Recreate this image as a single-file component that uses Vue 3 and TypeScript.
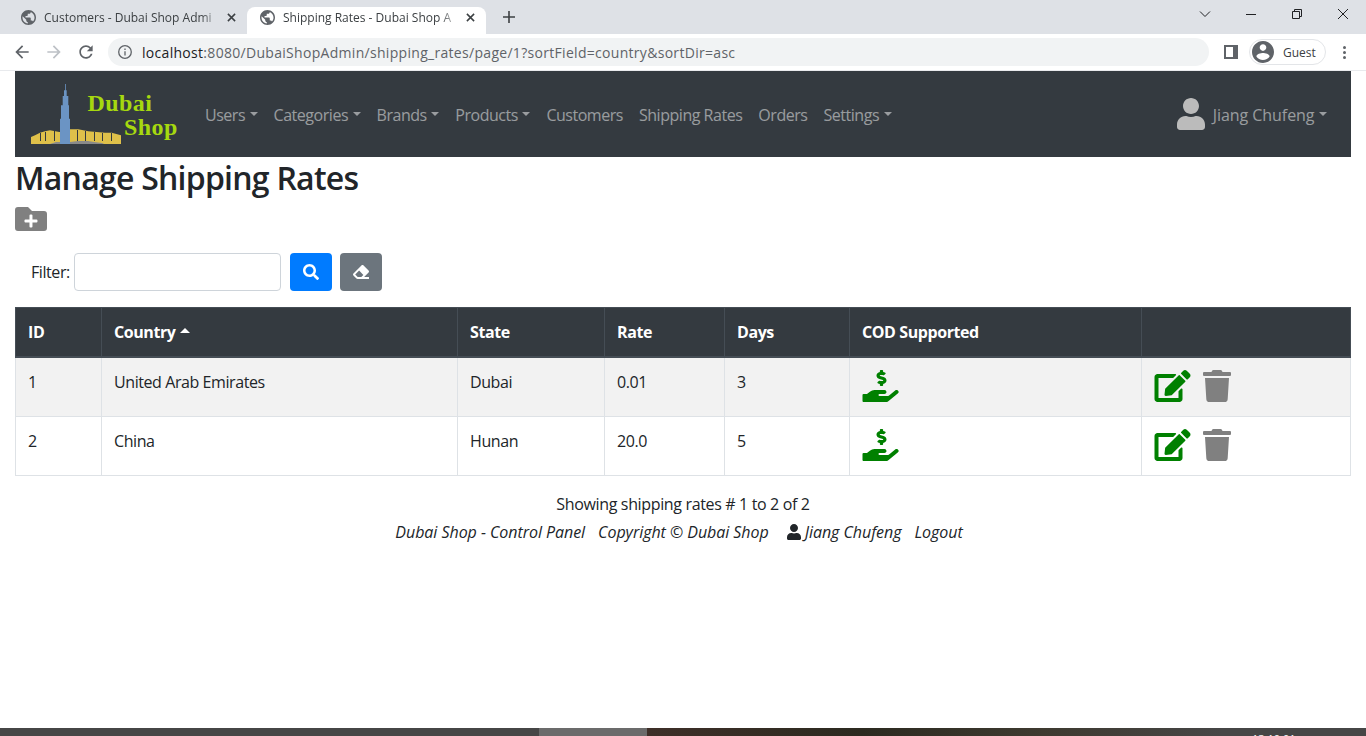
<template>
  <div class="screen">
    <header class="browser">
      <div class="tabstrip">
        <div v-for="t in tabs" :key="t.title" class="tab" :class="{ active: t.active }">
          <svg class="globe" viewBox="2 2 20 20"><path :d="icons.globe" /></svg>
          <span class="tab-title">{{ t.title }}</span>
          <svg class="tab-x" viewBox="0 0 10 10"><path d="M1 1l8 8M9 1l-8 8" /></svg>
        </div>
        <svg class="new-tab" viewBox="0 0 12 12"><path d="M6 0v12M0 6h12" /></svg>
        <div class="win-controls">
          <svg viewBox="0 0 12 12"><path d="M1 3.5l5 5 5-5" /></svg>
          <svg viewBox="0 0 12 12"><path d="M1 6.5h10" /></svg>
          <svg viewBox="0 0 12 12"><path d="M1.5 3.5h7v7h-7zM3.5 3.5v-2h7v7h-2" /></svg>
          <svg viewBox="0 0 12 12"><path d="M1 1l10 10M11 1L1 11" /></svg>
        </div>
      </div>
      <div class="toolbar">
        <svg class="tool" viewBox="0 0 24 24"><path :d="icons.back" /></svg>
        <svg class="tool off flip" viewBox="0 0 24 24"><path :d="icons.back" /></svg>
        <svg class="tool" viewBox="0 0 24 24"><path :d="icons.reload" /></svg>
        <div class="omnibox">
          <svg class="info" viewBox="0 0 16 16">
            <circle cx="8" cy="8" r="6.3" />
            <path d="M8 7.2v4.2M8 4.6v1.4" />
          </svg>
          <span class="url"><b>localhost</b>:8080/DubaiShopAdmin/shipping_rates/page/1?sortField=country&amp;sortDir=asc</span>
        </div>
        <span class="side-panel"></span>
        <div class="profile">
          <svg viewBox="2 2 20 20"><path :d="icons.account" /></svg>
          <span>Guest</span>
        </div>
        <div class="dots"><i></i><i></i><i></i></div>
      </div>
    </header>

    <main class="page">
      <nav class="navbar">
        <svg class="logo" width="151" height="62" viewBox="0 0 151 62">
          <path fill="#dfc04a" d="M1 61V54L5 52.3 10 49.7 15 48.3 20 47.3 29.3 49H40V46.3H48.3L58.3 48.3 75 49.7H81.7L91 52.3V61z" />
          <path fill="#33383f" d="M10 58V50h1v8zM15 58V49h1v9zM24 58V48h1v10zM47 58V47h1v11zM55 58V48h1v10zM64 58V49h1v9zM72 58V50h1v8zM81 58V50h1v8z" />
          <path fill="#8a8a8a" d="M20 61l6-2h4v2zM40 61v-2l8-1h10l6 1 8 1 2 1z" />
          <path fill="#6b94c4" d="M35 1h.8v6.3H36.7V13h1.6v9.3H39v13.4h1V61H30V35.7h1V22.3h1.7V13H34V7.3h1z" />
          <text class="logo-text" x="57.5" y="28">Dubai</text>
          <text class="logo-text" x="94" y="52">Shop</text>
        </svg>
        <ul class="nav-list">
          <li v-for="item in navItems" :key="item.label" class="nav-link" :class="{ caret: item.menu }">{{ item.label }}</li>
        </ul>
        <div class="nav-user">
          <svg class="user-icon" viewBox="0 0 448 512"><path :d="icons.user" /></svg>
          <span class="nav-link caret">Jiang Chufeng</span>
        </div>
      </nav>

      <h2 class="heading">Manage Shipping Rates</h2>
      <svg class="folder" viewBox="0 0 512 512"><path :d="icons.folderPlus" /></svg>

      <form class="filter" @submit.prevent>
        <label for="keyword">Filter:</label>
        <input id="keyword" type="search" />
        <button class="btn blue" type="button">
          <svg viewBox="0 0 512 512"><path :d="icons.search" /></svg>
        </button>
        <button class="btn grey" type="button">
          <svg viewBox="0 0 512 512"><path :d="icons.eraser" /></svg>
        </button>
      </form>

      <table class="rates">
        <colgroup>
          <col v-for="w in colWidths" :key="w" :style="{ width: w + 'px' }" />
        </colgroup>
        <thead>
          <tr>
            <th>ID</th>
            <th>Country <span class="sort-up"></span></th>
            <th>State</th>
            <th>Rate</th>
            <th>Days</th>
            <th>COD Supported</th>
            <th></th>
          </tr>
        </thead>
        <tbody>
          <tr v-for="r in rates" :key="r.id">
            <td>{{ r.id }}</td>
            <td>{{ r.country }}</td>
            <td>{{ r.state }}</td>
            <td>{{ r.rate }}</td>
            <td>{{ r.days }}</td>
            <td><svg class="ico cod" viewBox="0 0 576 512"><path :d="icons.hand" /></svg></td>
            <td>
              <div class="actions">
                <svg class="ico edit" viewBox="0 0 576 512"><path :d="icons.edit" /></svg>
                <svg class="ico trash" viewBox="0 0 448 512"><path :d="icons.trash" /></svg>
              </div>
            </td>
          </tr>
        </tbody>
      </table>

      <p class="showing">Showing shipping rates # 1 to 2 of 2</p>
      <footer class="foot">
        <span>Dubai Shop - Control Panel</span>
        <span>Copyright © Dubai Shop</span>
        <span class="foot-user">
          <svg viewBox="0 0 448 512"><path :d="icons.user" /></svg>
          Jiang Chufeng
        </span>
        <span>Logout</span>
      </footer>
    </main>

    <div class="taskbar">
      <span class="task-left"></span>
      <span class="task-active"></span>
      <span class="task-right"><span class="clock">13:10:01</span></span>
    </div>
  </div>
</template>

<script setup lang="ts">
const tabs = [
  { title: 'Customers - Dubai Shop Admi', active: false },
  { title: 'Shipping Rates - Dubai Shop A', active: true }
]

const navItems = [
  { label: 'Users', menu: true },
  { label: 'Categories', menu: true },
  { label: 'Brands', menu: true },
  { label: 'Products', menu: true },
  { label: 'Customers', menu: false },
  { label: 'Shipping Rates', menu: false },
  { label: 'Orders', menu: false },
  { label: 'Settings', menu: true }
]

const colWidths = [86, 356, 147, 120, 125, 292, 209]

const rates = [
  { id: 1, country: 'United Arab Emirates', state: 'Dubai', rate: '0.01', days: 3 },
  { id: 2, country: 'China', state: 'Hunan', rate: '20.0', days: 5 }
]

const icons = {
  globe: 'M12 2C6.48 2 2 6.48 2 12s4.48 10 10 10 10-4.48 10-10S17.52 2 12 2zm-1 17.93c-3.95-.49-7-3.85-7-7.93 0-.62.08-1.21.21-1.79L9 15v1c0 1.1.9 2 2 2v1.93zm6.9-2.54c-.26-.81-1-1.39-1.9-1.39h-1v-3c0-.55-.45-1-1-1H8v-2h2c.55 0 1-.45 1-1V7h2c1.1 0 2-.9 2-2v-.41c2.93 1.19 5 4.06 5 7.41 0 2.08-.8 3.97-2.1 5.39z',
  back: 'M20 11H7.83l5.59-5.59L12 4l-8 8 8 8 1.41-1.41L7.83 13H20v-2z',
  reload: 'M17.65 6.35C16.2 4.9 14.21 4 12 4c-4.42 0-7.99 3.58-7.99 8s3.57 8 7.99 8c3.73 0 6.84-2.55 7.73-6h-2.08c-.82 2.33-3.04 4-5.65 4-3.31 0-6-2.69-6-6s2.69-6 6-6c1.66 0 3.14.69 4.22 1.78L13 11h7V4l-2.35 2.35z',
  account: 'M12 2C6.48 2 2 6.48 2 12s4.48 10 10 10 10-4.48 10-10S17.52 2 12 2zm0 3c1.66 0 3 1.34 3 3s-1.34 3-3 3-3-1.34-3-3 1.34-3 3-3zm0 14.2c-2.5 0-4.71-1.28-6-3.22.03-1.99 4-3.08 6-3.08 1.99 0 5.97 1.09 6 3.08-1.29 1.94-3.5 3.22-6 3.22z',
  user: 'M224 256c70.7 0 128-57.3 128-128S294.7 0 224 0 96 57.3 96 128s57.3 128 128 128zm89.6 32h-16.7c-22.2 10.2-46.9 16-72.9 16s-50.6-5.8-72.9-16h-16.7C60.2 288 0 348.2 0 422.4V464c0 26.5 21.5 48 48 48h352c26.5 0 48-21.5 48-48v-41.6c0-74.2-60.2-134.4-134.4-134.4z',
  search: 'M505 442.7L405.3 343c-4.5-4.5-10.6-7-17-7H372c27.6-35.3 44-79.7 44-128C416 93.1 322.9 0 208 0S0 93.1 0 208s93.1 208 208 208c48.3 0 92.7-16.4 128-44v16.3c0 6.4 2.5 12.5 7 17l99.7 99.7c9.4 9.4 24.6 9.4 33.9 0l28.3-28.3c9.4-9.4 9.4-24.6.1-34zM208 336c-70.7 0-128-57.2-128-128 0-70.7 57.2-128 128-128 70.7 0 128 57.2 128 128 0 70.7-57.2 128-128 128z',
  eraser: 'M497.941 273.941c18.745-18.745 18.745-49.137 0-67.882l-160-160c-18.745-18.745-49.136-18.746-67.883 0l-256 256c-18.745 18.745-18.745 49.137 0 67.882l96 96A48.004 48.004 0 0 0 144 480h356c6.627 0 12-5.373 12-12v-40c0-6.627-5.373-12-12-12H355.883l142.058-142.059zm-302.627-62.627l137.373 137.373L265.373 416H150.628l-80-80 124.686-124.686z',
  folderPlus: 'M464,128H272L208,64H48A48,48,0,0,0,0,112V400a48,48,0,0,0,48,48H464a48,48,0,0,0,48-48V176A48,48,0,0,0,464,128ZM359.5,296a16,16,0,0,1-16,16h-64v64a16,16,0,0,1-16,16h-16a16,16,0,0,1-16-16V312h-64a16,16,0,0,1-16-16V280a16,16,0,0,1,16-16h64V200a16,16,0,0,1,16-16h16a16,16,0,0,1,16,16v64h64a16,16,0,0,1,16,16Z',
  edit: 'M402.6 83.2l90.2 90.2c3.8 3.8 3.8 10 0 13.8L274.4 405.6l-92.8 10.3c-12.4 1.4-22.9-9.1-21.5-21.5l10.3-92.8L388.8 83.2c3.8-3.8 10-3.8 13.8 0zm162-22.9l-48.8-48.8c-15.2-15.2-39.9-15.2-55.2 0l-35.4 35.4c-3.8 3.8-3.8 10 0 13.8l90.2 90.2c3.8 3.8 10 3.8 13.8 0l35.4-35.4c15.2-15.3 15.2-40 0-55.2zM384 346.2V448H64V128h229.8c3.2 0 6.2-1.3 8.5-3.5l40-40c7.6-7.6 2.2-20.5-8.5-20.5H48C21.5 64 0 85.5 0 112v352c0 26.5 21.5 48 48 48h352c26.5 0 48-21.5 48-48V306.2c0-10.7-12.9-16-20.5-8.5l-40 40c-2.2 2.3-3.5 5.3-3.5 8.5z',
  trash: 'M432 32H312l-9.4-18.7A24 24 0 0 0 281.1 0H166.8a23.72 23.72 0 0 0-21.4 13.3L136 32H16A16 16 0 0 0 0 48v32a16 16 0 0 0 16 16h416a16 16 0 0 0 16-16V48a16 16 0 0 0-16-16zM53.2 467a48 48 0 0 0 47.9 45h245.8a48 48 0 0 0 47.9-45L416 128H32z',
  hand: 'M271.06,144.3l54.27,14.3a8.59,8.59,0,0,1,6.63,8.1c0,4.6-4.09,8.4-9.12,8.4h-35.6a30,30,0,0,1-11.19-2.2c-5.24-2.2-11.28-1.7-15.3,2l-19,17.5a11.68,11.68,0,0,0-2.25,2.66,11.42,11.42,0,0,0,3.88,15.74,83.77,83.77,0,0,0,34.51,11.5V240c0,8.8,7.83,16,17.37,16h17.37c9.55,0,17.38-7.2,17.38-16V222.4c32.93-3.6,57.84-31,53.5-63-3.15-23-22.46-41.3-46.56-47.7L282.68,97.4a8.59,8.59,0,0,1-6.63-8.1c0-4.6,4.09-8.4,9.12-8.4h35.6A30,30,0,0,1,332,83.1c5.23,2.2,11.28,1.7,15.3-2l19-17.5A11.31,11.31,0,0,0,368.47,61a11.43,11.43,0,0,0-3.84-15.78,83.82,83.82,0,0,0-34.52-11.5V16c0-8.8-7.82-16-17.37-16H295.37C285.82,0,278,7.2,278,16V33.6c-32.89,3.6-57.85,31-53.51,63C227.63,119.6,247,137.9,271.06,144.3ZM565.27,328.1c-11.8-10.7-30.2-10-42.6,0L430.27,402a63.64,63.64,0,0,1-40,14H272a16,16,0,0,1,0-32h78.29c15.9,0,30.71-10.9,33.25-26.6a31.2,31.2,0,0,0,.46-5.46A32,32,0,0,0,352,320H192a117.66,117.66,0,0,0-74.1,26.29L71.4,384H16A16,16,0,0,0,0,400v96a16,16,0,0,0,16,16H372.77a64,64,0,0,0,40-14L564,377a32,32,0,0,0,1.27-48.9Z'
}
</script>

<style>
html,
body {
  margin: 0;
  overflow: hidden;
}
</style>

<style scoped>
.screen {
  display: flex;
  flex-direction: column;
  height: 736px;
  font-family: "Open Sans", "Noto Sans", sans-serif;
  font-size: 16px;
  letter-spacing: -0.42px;
  color: #212529;
  background: #fff;
}

/* browser chrome */
.browser {
  flex: none;
  height: 71px;
  box-sizing: border-box;
  border-bottom: 1px solid #e8eaed;
}

.tabstrip {
  display: flex;
  align-items: flex-end;
  height: 34px;
  padding-left: 8px;
  background: #dee1e6;
}

.tab {
  display: flex;
  align-items: center;
  box-sizing: border-box;
  width: 239px;
  height: 27px;
  padding: 0 11px 6px 13px;
  border-radius: 8px 8px 0 0;
  color: #3c4043;
  font-size: 12px;
  letter-spacing: 0;
}

.tab.active {
  background: #fff;
}

.globe {
  flex: none;
  width: 15px;
  height: 15px;
  margin-right: 8px;
  fill: #5f6368;
}

.tab-title {
  flex: 1;
  white-space: nowrap;
  -webkit-mask-image: linear-gradient(to right, #000 88%, transparent 100%);
  mask-image: linear-gradient(to right, #000 88%, transparent 100%);
}

.tab-x {
  flex: none;
  width: 9px;
  height: 9px;
  margin-left: 5px;
  fill: none;
  stroke: #3c4043;
  stroke-width: 1.7;
}

.new-tab {
  width: 12px;
  height: 12px;
  margin: 0 0 11px 17px;
  fill: none;
  stroke: #3c4043;
  stroke-width: 1.6;
}

.win-controls {
  display: flex;
  align-self: flex-start;
  gap: 34px;
  margin: 8px 17px 0 auto;
}

.win-controls svg {
  width: 12px;
  height: 12px;
  fill: none;
  stroke: #202124;
  stroke-width: 1;
}

.toolbar {
  display: flex;
  align-items: center;
  height: 36px;
  padding-left: 12px;
}

.tool {
  flex: none;
  width: 20px;
  height: 20px;
  margin-right: 12px;
  fill: #5f6368;
}

.tool.off {
  fill: #bdc1c6;
}

.tool.flip {
  transform: scaleX(-1);
}

.omnibox {
  display: flex;
  align-items: center;
  box-sizing: border-box;
  width: 1101px;
  height: 28px;
  padding-left: 9px;
  border-radius: 14px;
  background: #f1f3f4;
}

.info {
  width: 16px;
  height: 16px;
  margin-right: 9px;
  fill: none;
  stroke: #5f6368;
  stroke-width: 1.3;
}

.url {
  font-size: 14px;
  letter-spacing: 0.3px;
  color: #5f6368;
}

.url b {
  font-weight: 400;
  color: #202124;
}

.side-panel {
  box-sizing: border-box;
  width: 14px;
  height: 14px;
  margin-left: 15px;
  border: 2px solid #5f6368;
  border-right-width: 5px;
}

.profile {
  display: flex;
  align-items: center;
  gap: 9px;
  box-sizing: border-box;
  width: 77px;
  height: 26px;
  margin-left: 11px;
  padding-left: 2px;
  border: 1px solid #e3e5e8;
  border-radius: 13px;
  font-size: 12px;
  letter-spacing: 0;
  color: #3c4043;
}

.profile svg {
  width: 22px;
  height: 22px;
  fill: #5f6368;
}

.dots {
  display: flex;
  flex-direction: column;
  gap: 2px;
  margin-left: 17px;
}

.dots i {
  width: 3px;
  height: 3px;
  border-radius: 50%;
  background: #5f6368;
}

/* page */
.page {
  flex: 1;
  padding: 0 15px;
}

.navbar {
  display: flex;
  align-items: center;
  height: 86px;
  padding: 0 16px 0 15px;
  background: #343a40;
}

.logo {
  flex: none;
  margin-right: 16px;
}

.logo-text {
  font-family: "Liberation Serif", serif;
  font-size: 24px;
  font-weight: 700;
  letter-spacing: 0.4px;
  fill: #a6d80f;
}

.nav-list {
  display: flex;
  margin: 1px 0 0;
  padding: 0;
  list-style: none;
  letter-spacing: -0.47px;
}

.nav-link {
  display: block;
  padding: 8px;
  color: rgba(255, 255, 255, 0.5);
}

.caret::after {
  content: "";
  display: inline-block;
  margin-left: 4.5px;
  vertical-align: 0.255em;
  border-top: 0.3em solid;
  border-right: 0.3em solid transparent;
  border-left: 0.3em solid transparent;
}

.nav-user {
  display: flex;
  align-items: center;
  margin-left: auto;
}

.nav-user .nav-link {
  margin-top: 1px;
  letter-spacing: -0.05px;
}

.user-icon {
  width: 28px;
  height: 32px;
  fill: #bbb;
}

.heading {
  margin: 0;
  padding: 2px 0 0;
  font-size: 32px;
  line-height: 38px;
  font-weight: 600;
  letter-spacing: -0.75px;
  white-space: nowrap;
}

.folder {
  display: block;
  width: 32px;
  height: 32px;
  margin-top: 6px;
  fill: #808080;
}

.filter {
  display: flex;
  align-items: center;
  height: 38px;
  margin-top: 18px;
  padding-left: 16px;
}

.filter label {
  margin-right: 4px;
}

.filter input {
  box-sizing: border-box;
  width: 207px;
  height: 38px;
  padding: 6px 12px;
  border: 1px solid #ced4da;
  border-radius: 4px;
}

.btn {
  display: flex;
  align-items: center;
  justify-content: center;
  width: 42px;
  height: 38px;
  padding: 0;
  border: 0;
  border-radius: 4px;
}

.btn svg {
  width: 16px;
  height: 16px;
  fill: #fff;
}

.btn.blue {
  margin-left: 9px;
  background: #007bff;
}

.btn.grey {
  margin-left: 8px;
  background: #6c757d;
}

.rates {
  width: 1335px;
  margin-top: 16px;
  table-layout: fixed;
  border-collapse: collapse;
}

.rates th,
.rates td {
  box-sizing: border-box;
  padding: 12px;
  border: 1px solid #dee2e6;
  text-align: left;
  vertical-align: top;
  line-height: 24px;
}

.rates th {
  height: 49px;
  vertical-align: bottom;
  border-color: #454d55;
  border-bottom-width: 2px;
  background: #343a40;
  color: #fff;
  font-weight: 700;
}

.rates td {
  height: 59px;
}

.rates tbody tr:nth-child(odd) {
  background: #f2f2f2;
}

.sort-up {
  display: inline-block;
  margin-left: 1px;
  vertical-align: 5px;
  border-right: 5px solid transparent;
  border-bottom: 5px solid #fff;
  border-left: 5px solid transparent;
}

.ico {
  display: block;
}

.cod {
  width: 37px;
  height: 32px;
  fill: #008000;
}

.actions {
  display: flex;
  align-items: center;
  gap: 12px;
}

.edit {
  width: 37px;
  height: 32px;
  fill: #008000;
}

.trash {
  width: 28px;
  height: 32px;
  fill: #808080;
}

.showing {
  margin: 16px 0 0;
  line-height: 24px;
  text-align: center;
  letter-spacing: -0.35px;
}

.foot {
  display: flex;
  justify-content: center;
  gap: 13px;
  margin-top: 4px;
  padding-right: 8px;
  line-height: 24px;
  font-style: italic;
  letter-spacing: -0.05px;
}

.foot-user {
  display: flex;
  align-items: center;
  gap: 4px;
  margin-left: 5px;
}

.foot-user svg {
  width: 14px;
  height: 16px;
  fill: #212529;
}

.taskbar {
  display: flex;
  flex: none;
  height: 8px;
  overflow: hidden;
  background: #464646;
}

.task-left {
  width: 539px;
}

.task-active {
  width: 108px;
  background: #6b6b6b;
}

.task-right {
  flex: 1;
  padding-left: 605px;
  background: linear-gradient(to right, #3e2f28, #2c2a20 30%, #3e3a30 55%, #464646 80%);
}

.clock {
  display: block;
  margin-top: 4px;
  font-size: 11px;
  line-height: 13px;
  letter-spacing: 0;
  color: #fff;
}
</style>
